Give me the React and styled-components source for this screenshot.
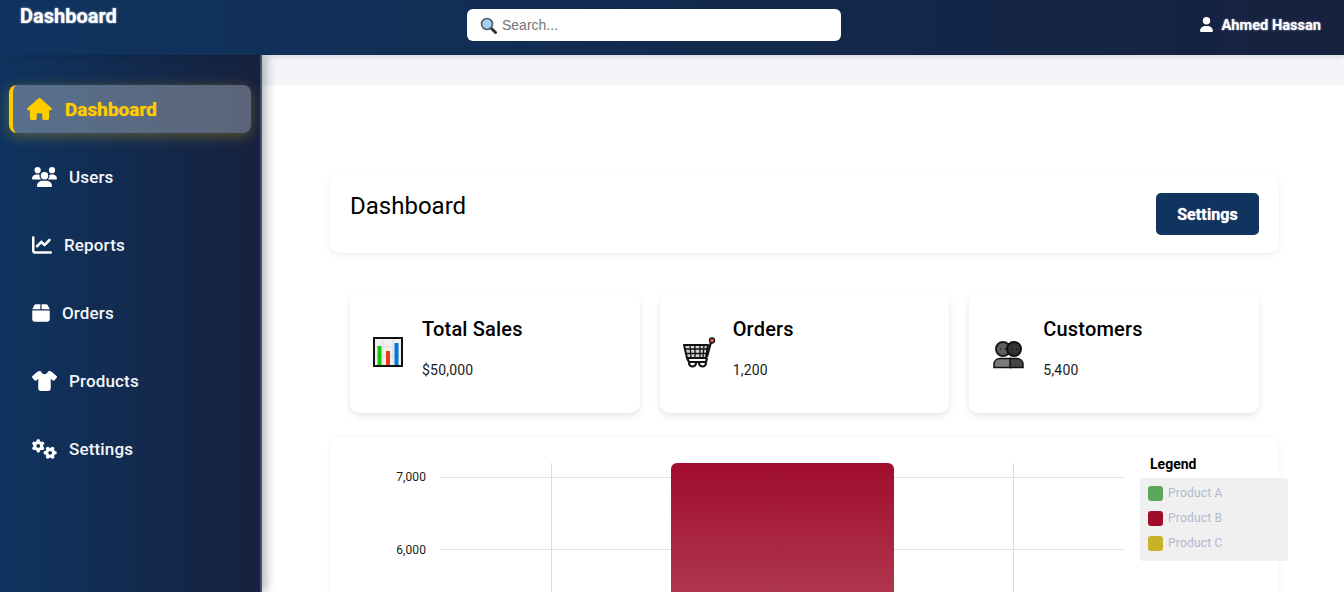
import React from "react";
import styled, { createGlobalStyle } from "styled-components";
import { FaHouse, FaUsers, FaChartLine, FaBox, FaShirt, FaGears, FaUser } from "react-icons/fa6";

const Global = createGlobalStyle`
  html, body { margin: 0; padding: 0; height: 592px; overflow: hidden; background: #fff; }
  * { box-sizing: border-box; }
  body { font-family: Roboto, "Liberation Sans", sans-serif; }
`;

const Page = styled.div`
  width: 1344px;
  height: 592px;
  display: flex;
  flex-direction: column;
  overflow: hidden;
`;
const Header = styled.header`
  position: relative;
  z-index: 3;
  flex: 0 0 55px;
  display: grid;
  grid-template-columns: 447px 374px 1fr;
  padding: 0 23px 0 20px;
  background: linear-gradient(90deg, #0f3460, #16213e);
  color: #fff;
  box-shadow: 0 2px 6px rgba(0, 0, 0, 0.12);
`;
const Logo = styled.h1`
  margin: 4px 0 0;
  font-size: 20px;
  line-height: 24px;
  font-weight: 700;
  text-shadow: 0 0 2px rgba(255, 255, 255, 0.8);
`;
const Search = styled.label`
  margin-top: 9px;
  height: 32px;
  display: flex;
  align-items: center;
  gap: 5px;
  padding-left: 13px;
  background: #fff;
  border-radius: 6px;
`;
const SearchInput = styled.input`
  flex: 1;
  min-width: 0;
  border: 0;
  outline: 0;
  padding: 0;
  font: 14px "Liberation Sans", Arial, sans-serif;
  &::placeholder { color: #757575; opacity: 1; }
`;
const LensGlyph = styled.svg`
  flex: none;
  width: 17px;
  height: 17px;
`;
const UserBox = styled.div`
  justify-self: end;
  display: flex;
  align-items: center;
  gap: 9px;
  height: 49px;
  font-size: 14.6px;
  font-weight: 700;
  text-shadow: 0 0 2px rgba(255, 255, 255, 0.7);
  & > svg { width: 13px; height: 15px; }
`;
const Body = styled.div`
  flex: 1;
  display: flex;
  min-height: 0;
`;
const Sidebar = styled.nav`
  position: relative;
  z-index: 2;
  flex: 0 0 262px;
  display: flex;
  flex-direction: column;
  gap: 20px;
  padding: 30px 9px 0;
  background: linear-gradient(90deg, #0f3460, #16213e);
  border-right: 2px solid #3b5378;
  box-shadow: 4px 0 10px rgba(0, 0, 0, 0.3);
`;
const NavItem = styled.a`
  height: 48px;
  display: flex;
  align-items: center;
  border-radius: 8px;
  gap: ${(p) => (p.$active ? "13px" : "12px")};
  padding-left: ${(p) => (p.$active ? "14px" : "23px")};
  border-left: ${(p) => (p.$active ? "4px solid #ffcc00" : "0")};
  color: ${(p) => (p.$active ? "#ffcc00" : "#f4f5f9")};
  background: ${(p) => (p.$active ? "rgba(255, 255, 255, 0.3)" : "transparent")};
  box-shadow: ${(p) => (p.$active ? "0 3px 14px rgba(255, 204, 0, 0.3)" : "none")};
  font-size: ${(p) => (p.$active ? "19px" : "17px")};
  font-weight: ${(p) => (p.$active ? 700 : 500)};
  letter-spacing: ${(p) => (p.$active ? "0" : "0.15px")};
  text-shadow: ${(p) => (p.$active ? "0 0 1px rgba(255, 204, 0, 0.9)" : "none")};
  & > svg {
    flex: none;
    width: ${(p) => p.$iconWidth}px;
    height: ${(p) => (p.$active ? "22px" : "20px")};
    color: ${(p) => (p.$active ? "#ffcc00" : "#fff")};
  }
`;
const Main = styled.main`
  flex: 1;
  min-width: 0;
  padding-top: 30px;
  background: #f4f5f9;
`;
const Content = styled.div`
  height: 100%;
  background: #fff;
  padding: 90px 65px 0 68px;
`;
const TopCard = styled.section`
  height: 78px;
  display: flex;
  justify-content: space-between;
  padding: 18px 20px 0;
  border-radius: 10px;
  background: #fff;
  box-shadow: 0 2px 7px rgba(0, 0, 0, 0.08);
`;
const Title = styled.h2`
  margin: -1px 0 0;
  font-size: 24px;
  line-height: 28px;
  font-weight: 400;
  color: #000;
`;
const Button = styled.button`
  height: 42px;
  width: 103px;
  border: 0;
  border-radius: 5px;
  background: #0f3460;
  color: #fff;
  font: 700 16px Roboto, sans-serif;
  letter-spacing: 0.1px;
  text-shadow: 0 0 1px rgba(255, 255, 255, 0.9);
`;
const Stats = styled.div`
  display: grid;
  grid-template-columns: repeat(3, 1fr);
  gap: 20px;
  padding: 0 20px;
  margin-top: 40px;
`;
const StatCard = styled.article`
  height: 120px;
  display: flex;
  align-items: center;
  gap: ${(p) => p.$gap}px;
  padding: 0 20px 0 21px;
  border-radius: 10px;
  background: #fff;
  box-shadow: 0 3px 7px rgba(0, 0, 0, 0.1);
`;
const IconSlot = styled.svg`
  flex: none;
  width: 36px;
  height: 36px;
`;
const StatText = styled.div`
  margin-bottom: 10px;
`;
const StatName = styled.h3`
  margin: 0 0 20px;
  font-size: 20px;
  line-height: 24px;
  font-weight: 500;
  letter-spacing: 0.18px;
  color: #000;
`;
const StatValue = styled.p`
  margin: 0;
  font-size: 14px;
  line-height: 18px;
  letter-spacing: 0.2px;
  color: #1a1a1a;
`;
const ChartCard = styled.section`
  position: relative;
  margin-top: 24px;
  height: 300px;
  border-radius: 10px;
  background: #fff;
  box-shadow: 0 0 5px rgba(0, 0, 0, 0.05);
`;
const ChartSvg = styled.svg`
  display: block;
  width: 800px;
  height: 155px;
  text { font: 12px Roboto, sans-serif; letter-spacing: 0.1px; fill: #1a1a1a; }
`;
const LegendTitle = styled.h4`
  position: absolute;
  left: 820px;
  top: 19px;
  margin: 0;
  font-size: 14px;
  line-height: 17px;
  font-weight: 700;
  color: #000;
`;
const Legend = styled.ul`
  position: absolute;
  left: 810px;
  top: 41px;
  width: 148px;
  height: 83px;
  margin: 0;
  padding: 8px;
  list-style: none;
  border-radius: 3px;
  background: rgba(225, 225, 225, 0.5);
  display: flex;
  flex-direction: column;
  gap: 10px;
`;
const LegendItem = styled.li`
  height: 15px;
  display: flex;
  align-items: center;
  gap: 5px;
  font-size: 12px;
  line-height: 13px;
  letter-spacing: 0.2px;
  color: #b0b9d0;
`;
const Swatch = styled.span`
  width: 15px;
  height: 15px;
  border-radius: 3px;
  background: ${(p) => p.$color};
`;

const ChartIcon = () => (
  <IconSlot viewBox="0 0 36 36">
    <rect x="3" y="3" width="28" height="28" fill="#f1f1f1" stroke="#111" strokeWidth="2" />
    <path d="M4 12h26M4 21h26M12 4v26M22 4v26" stroke="#ddd" strokeWidth="1" />
    <rect x="6.500" y="11" width="4" height="19" fill="#16c60c" />
    <rect x="15" y="16" width="4" height="14" fill="#f03a17" />
    <rect x="23.500" y="8" width="4" height="22" fill="#0078d7" />
  </IconSlot>
);
const CartIcon = () => (
  <IconSlot viewBox="0 0 36 36">
    <path d="M3 10h24l-2 13H6z" fill="#d4d4d4" stroke="#111" strokeWidth="2" strokeLinejoin="round" />
    <path d="M4 14h22M5 18.500h20M9 10l1 13M14 10v13M19 10v13M23 10l-1 13" stroke="#111" strokeWidth="1.300" />
    <path d="M26 22l4-15M6 23l2 4h17l1-4" fill="none" stroke="#111" strokeWidth="2.200" strokeLinejoin="round" />
    <circle cx="31" cy="5.500" r="2.500" fill="#ea5a47" stroke="#111" strokeWidth="1.300" />
    <path d="M8 28a3.500 3.500 0 0 0 7 0M18 28a3.500 3.500 0 0 0 7 0" fill="#fff" stroke="#111" strokeWidth="2.200" />
  </IconSlot>
);
const PeopleIcon = () => (
  <IconSlot viewBox="0 0 36 36">
    <path d="M4 32.500v-3c0-4 3-6 6-6h11v9z" fill="#7a7a7a" stroke="#111" strokeWidth="1.500" />
    <path d="M20 32.500v-9h7c3 0 6 2 6 6v3z" fill="#454545" stroke="#111" strokeWidth="1.500" />
    <circle cx="13" cy="14" r="7" fill="#5e5e5e" stroke="#1c1c1c" strokeWidth="2" />
    <circle cx="24" cy="14" r="7" fill="#333" stroke="#111" strokeWidth="2" />
    <path d="M10 14h1M15 14h1M21 14h1M26 14h1" stroke="#111" strokeWidth="1.500" />
  </IconSlot>
);
const LensIcon = () => (
  <LensGlyph viewBox="0 0 17 17">
    <path d="M10 10l5.500 5.500" stroke="#333" strokeWidth="3" strokeLinecap="round" />
    <circle cx="7" cy="7" r="5.500" fill="#9fd2f2" stroke="#555" strokeWidth="1.500" />
  </LensGlyph>
);

const nav = [
  [FaHouse, "Dashboard", 25, true],
  [FaUsers, "Users", 25],
  [FaChartLine, "Reports", 20],
  [FaBox, "Orders", 18],
  [FaShirt, "Products", 25],
  [FaGears, "Settings", 25],
];
const stats = [
  [ChartIcon, "Total Sales", "$50,000", 15],
  [CartIcon, "Orders", "1,200", 16],
  [PeopleIcon, "Customers", "5,400", 17],
];
const legend = [
  ["#5ba85a", "Product A"],
  ["#a00c2c", "Product B"],
  ["#c9b227", "Product C"],
];

export default function App() {
  return (
    <Page>
      <Global />
      <Header>
        <Logo>Dashboard</Logo>
        <Search>
          <LensIcon />
          <SearchInput placeholder="Search..." />
        </Search>
        <UserBox>
          <FaUser />
          Ahmed Hassan
        </UserBox>
      </Header>
      <Body>
        <Sidebar>
          {nav.map(([Icon, label, iconWidth, active]) => (
            <NavItem key={label} $active={active} $iconWidth={iconWidth}>
              <Icon />
              {label}
            </NavItem>
          ))}
        </Sidebar>
        <Main>
          <Content>
            <TopCard>
              <Title>Dashboard</Title>
              <Button>Settings</Button>
            </TopCard>
            <Stats>
              {stats.map(([Icon, name, value, gap]) => (
                <StatCard key={name} $gap={gap}>
                  <Icon />
                  <StatText>
                    <StatName>{name}</StatName>
                    <StatValue>{value}</StatValue>
                  </StatText>
                </StatCard>
              ))}
            </Stats>
            <ChartCard>
              <ChartSvg viewBox="0 0 800 155">
                <defs>
                  <linearGradient id="bar" x1="0" y1="0" x2="0" y2="1">
                    <stop offset="0" stopColor="#a00c2c" />
                    <stop offset="1" stopColor="#b03650" />
                  </linearGradient>
                </defs>
                <path d="M110 40.500H795M110 112.500H795" stroke="#e2e2e2" strokeWidth="1" />
                <path d="M221.500 26V155M683.500 26V155" stroke="#dcdcdc" strokeWidth="1" />
                <text x="96" y="43.500" textAnchor="end">7,000</text>
                <text x="96" y="116.500" textAnchor="end">6,000</text>
                <path d="M341 155V32a6 6 0 0 1 6-6h211a6 6 0 0 1 6 6V155z" fill="url(#bar)" />
                <path d="M452.500 26V155" stroke="#8f1c38" strokeOpacity="0.2" strokeWidth="1" />
              </ChartSvg>
              <LegendTitle>Legend</LegendTitle>
              <Legend>
                {legend.map(([color, label]) => (
                  <LegendItem key={label}>
                    <Swatch $color={color} />
                    {label}
                  </LegendItem>
                ))}
              </Legend>
            </ChartCard>
          </Content>
        </Main>
      </Body>
    </Page>
  );
}
